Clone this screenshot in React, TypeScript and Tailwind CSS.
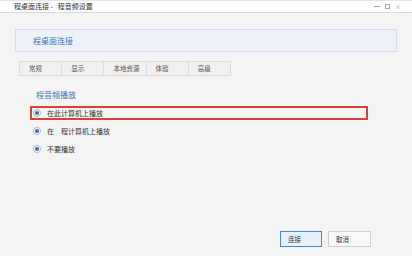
import React from "react";

const TABS = ["常规", "显示", "本地资源", "体验", "高级"];

const OPTIONS = [
  { label: "在此计算机上播放", active: true },
  { label: "在\u3000程计算机上播放", active: false },
  { label: "不要播放", active: false },
];

const FONT = "font-['Noto_Sans_CJK_SC',sans-serif]";

function Radio() {
  return (
    <span className="w-[8px] h-[8px] rounded-full border border-[#b5b5b5] bg-white flex items-center justify-center shrink-0">
      <span className="w-[4px] h-[4px] rounded-full bg-[#2f6fc2]" />
    </span>
  );
}

export default function App() {
  return (
    <div className={`w-[412px] h-[256px] bg-[#f4f4f4] flex flex-col overflow-hidden ${FONT}`}>
      {/* Title bar */}
      <div className="h-[13px] bg-white border-t border-t-[#e6e6e6] border-b border-b-[#d9d9d9] flex items-center pl-[14px] pr-[11px] shrink-0">
        <span className="text-[7px] leading-none text-[#333]">程桌面连接 -&nbsp;&nbsp;&nbsp;程音频设置</span>
        <div className="ml-auto flex items-center gap-[4px] text-[#9a9a9a]">
          <span className="w-[6px] h-[1px] bg-[#aaa]" />
          <span className="w-[5px] h-[5px] border border-[#aaa] ml-[1px]" />
          <span className="text-[6px] leading-none ml-[1px]">×</span>
        </div>
      </div>

      <div className="flex-1 flex flex-col px-[15px]">
        {/* Header box */}
        <div className="mt-[16px] h-[23px] bg-[#edf2fa] border border-[#d6dee9] flex items-center pl-[17px]">
          <span className="text-[8px] leading-none text-[#3f74b3]">程桌面连接</span>
        </div>

        {/* Tabs */}
        <div className="mt-[9px] ml-[4px] flex h-[15px] w-[212px] border border-[#dcdcdc] bg-[#f0f0f0]">
          {TABS.map((t, i) => (
            <div
              key={t}
              className={`flex-1 flex items-center pl-[9px] text-[6.5px] leading-none text-[#555] ${i > 0 ? "border-l border-[#dcdcdc]" : ""}`}
            >
              {t}
            </div>
          ))}
        </div>

        {/* Audio section */}
        <div className="mt-[14px] pl-[21px] h-[10px] flex items-center">
          <span className="text-[8px] leading-none text-[#3f74b3]">程音频播放</span>
        </div>

        <div className="mt-[6px] ml-[15px] flex flex-col gap-[4px]">
          {OPTIONS.map((o) => (
            <div
              key={o.label}
              className={`w-[338px] h-[14px] border-2 flex items-center pl-[1px] gap-[6px] ${o.active ? "border-[#d8413a]" : "border-transparent"}`}
            >
              <Radio />
              <span className="text-[7px] leading-none text-[#333]">{o.label}</span>
            </div>
          ))}
        </div>

        <div className="flex-1" />

        {/* Buttons */}
        <div className="flex justify-end gap-[6px] pr-[26px] mb-[9px]">
          <button className="w-[42px] h-[16px] bg-[#e6f1fb] border border-[#4a87c6] flex items-center pl-[7px] text-[6.5px] leading-none text-[#333]">
            连接
          </button>
          <button className="w-[43px] h-[16px] bg-[#f9f9f9] border border-[#cfcfcf] flex items-center pl-[7px] text-[6.5px] leading-none text-[#333]">
            取消
          </button>
        </div>
      </div>
    </div>
  );
}
